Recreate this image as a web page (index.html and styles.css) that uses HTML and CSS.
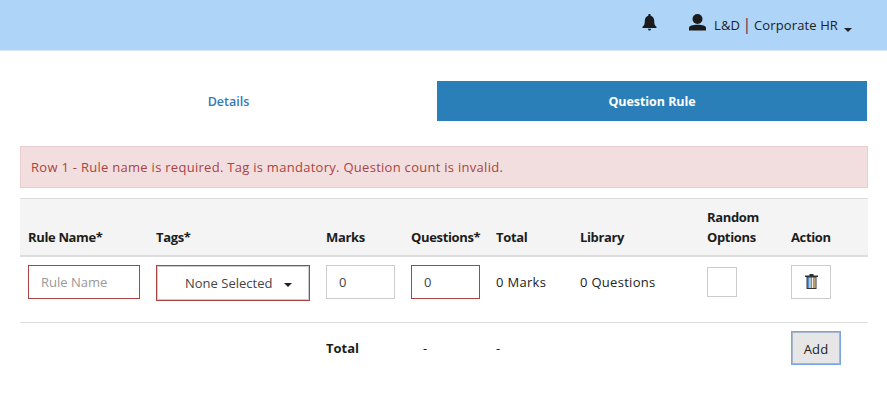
FILE: index.html
```html
<!DOCTYPE html>
<html lang="en">
<head>
<meta charset="utf-8">
<title>Question Rule</title>
<link rel="stylesheet" href="styles.css">
</head>
<body>
<header class="topbar">
  <svg class="bell" viewBox="0 0 15 17" aria-hidden="true"><path d="M7.500 0C6.800 0 6.300.5 6.300 1.200v.5C4.100 2.300 2.800 4.200 2.800 6.700c0 3.500-.7 4.800-2.200 6.100-.5.4-.3 1.200.4 1.200h13c.7 0 .9-.8.4-1.200-1.500-1.300-2.200-2.600-2.200-6.100 0-2.500-1.300-4.400-3.500-5v-.5C8.700.5 8.200 0 7.500 0zM6 14.700c0 1 .7 1.800 1.500 1.800S9 15.700 9 14.700z"/></svg>
  <div class="user">
    <svg class="person" viewBox="0 0 17 17" aria-hidden="true"><circle cx="8.500" cy="5" r="5"/><path d="M0 16.500v-2.700C0 11.800 3.500 10.800 8.500 10.800s8.500 1 8.500 3v2.700z"/></svg>
    <span class="user-name">L&amp;D <span class="pipe">|</span> Corporate HR</span>
    <span class="caret caret-user"></span>
  </div>
</header>
<main class="content">
  <nav class="tabs">
    <a class="tab">Details</a>
    <a class="tab tab-active">Question Rule</a>
  </nav>
  <div class="alert">Row 1 - Rule name is required. Tag is mandatory. Question count is invalid.</div>
  <table class="rules">
    <colgroup>
      <col class="c-name"><col class="c-tags"><col class="c-marks"><col class="c-q"><col class="c-total"><col class="c-lib"><col class="c-rand"><col class="c-act">
    </colgroup>
    <thead>
      <tr><th>Rule Name*</th><th>Tags*</th><th>Marks</th><th>Questions*</th><th>Total</th><th>Library</th><th>Random Options</th><th>Action</th></tr>
    </thead>
    <tbody>
      <tr class="row-main">
        <td><input class="field field-err field-name" placeholder="Rule Name"></td>
        <td><div class="select"><span>None Selected</span><span class="caret caret-select"></span></div></td>
        <td><input class="field field-num" value="0"></td>
        <td><input class="field field-num field-err" value="0"></td>
        <td class="wide">0 Marks</td>
        <td class="wide">0 Questions</td>
        <td><span class="checkbox"></span></td>
        <td><button class="btn-trash" aria-label="Delete"><svg viewBox="0 0 13 15" width="13" height="15" aria-hidden="true"><path fill="#2a3038" d="M4.500 0h4v1.500H13v1.500H0V1.500h4.500z"/><rect x="1.500" y="3" width="10" height="12" fill="#33363a"/><rect x="2.500" y="3.500" width="1.800" height="10.500" fill="#4f94d4"/><rect x="4.300" y="3.500" width="1.500" height="10.500" fill="#f3efe6"/><rect x="5.800" y="3.500" width="1" height="10.500" fill="#4f94d4"/><rect x="6.800" y="3.500" width="1.500" height="10.500" fill="#f3efe6"/><rect x="8.300" y="3.500" width="1.200" height="10.500" fill="#e3a04a"/><rect x="9.500" y="3.500" width="1" height="10.500" fill="#f3d9a8"/></svg></button></td>
      </tr>
      <tr class="row-total">
        <td></td><td></td><td class="strong">Total</td><td class="dash-q">-</td><td>-</td><td></td><td></td>
        <td><button class="btn-add">Add</button></td>
      </tr>
    </tbody>
  </table>
</main>
</body>
</html>
```
FILE: styles.css
```css
* { box-sizing: border-box; }
html, body { margin: 0; padding: 0; }
body {
  background: #fff;
  color: #222;
  font-family: "Open Sans", "Noto Sans", sans-serif;
  font-size: 13px;
  overflow: hidden;
}
.topbar {
  height: 51px;
  background: #aed4f8;
  border-bottom: 1px solid #d8e6f2;
  display: flex;
  align-items: flex-start;
  justify-content: flex-end;
  padding-right: 35px;
  color: #222;
}
.bell { width: 15px; height: 17px; margin: 14px 32px 0 0; fill: #1b1b1b; }
.user { display: flex; align-items: flex-start; }
.person { width: 17px; height: 17px; margin: 14px 8px 0 0; fill: #1b1b1b; }
.user-name { line-height: 18px; margin-top: 16px; letter-spacing: .12px; }
.pipe { color: #6b2a45; font-size: 16px; line-height: 16px; margin: 0 -1px; }
.caret { display: inline-block; width: 0; height: 0; border-left: 4px solid transparent; border-right: 4px solid transparent; border-top: 4px solid #222; }
.caret-user { margin: 28px 0 0 6px; }
.content { padding: 30px 20px 0 20px; }
.tabs { display: flex; height: 40px; }
.tab { display: flex; align-items: center; justify-content: center; font-weight: 600; font-size: 12.500px; color: #337ab7; }
.tab:first-child { width: 417px; }
.tab-active { flex: 1; background: #2a7fb8; color: #fff; font-weight: 700; letter-spacing: -.05px; }
.alert {
  margin-top: 25px;
  width: 848px;
  height: 42px;
  line-height: 40px;
  padding: 0 10px;
  background: #f2dede;
  border: 1px solid #ebccd1;
  color: #a94442;
  font-size: 13px;
  letter-spacing: .28px;
}
.rules { margin-top: 10px; width: 848px; table-layout: fixed; border-collapse: collapse; }
.c-name { width: 128px; }
.c-tags { width: 170px; }
.c-marks { width: 85px; }
.c-q { width: 85px; }
.c-total { width: 84px; }
.c-lib { width: 127px; }
.c-rand { width: 84px; }
.c-act { width: 85px; }
.rules th {
  background: #f4f4f4;
  border-top: 1px solid #ddd;
  border-bottom: 2px solid #ddd;
  height: 57px;
  padding: 7px 8px 8px;
  text-align: left;
  vertical-align: bottom;
  font-weight: 700;
  line-height: 20px;
  letter-spacing: -.35px;
  color: #1d1d1d;
}
.rules td { padding: 8px 8px 8px; vertical-align: top; line-height: 34px; }
.wide { letter-spacing: .3px; }
.row-main td { height: 67px; border-bottom: 1px solid #ddd; }
.row-total td { height: 56px; padding-top: 8px; line-height: 34px; }
.strong { font-weight: 700; color: #1d1d1d; }
.rules .dash-q { padding-left: 20px; }
.field {
  display: block;
  height: 34px;
  font: inherit;
  color: #444;
  background: #fff;
  border: 1px solid #ccc;
  padding: 0 12px;
  outline: none;
}
.field-name { width: 112px; }
.field-num { width: 69px; }
.field-err { border-color: #a94442; }
.field::placeholder { color: #999; opacity: 1; }
.select {
  width: 154px;
  height: 36px;
  border: 1px solid #a94442;
  box-shadow: inset 0 0 0 1px #ccc;
  display: flex;
  align-items: center;
  color: #444;
  padding-left: 28px;
}
.caret-select { margin: 5px 0 0 12px; }
.checkbox { display: block; width: 30px; height: 30px; margin-top: 2px; border: 1px solid #ccc; background: #fff; }
.btn-trash {
  display: flex;
  align-items: center;
  justify-content: center;
  width: 40px;
  height: 34px;
  padding: 0;
  background: #fff;
  border: 1px solid #ccc;
}
.btn-add {
  display: block;
  width: 50px;
  height: 34px;
  padding: 0;
  font: inherit;
  letter-spacing: .1px;
  color: #222;
  background: #e6e6e6;
  border: 1px solid #7aa5e4;
  box-shadow: inset 0 0 0 1px #a9b6c9;
}
```
